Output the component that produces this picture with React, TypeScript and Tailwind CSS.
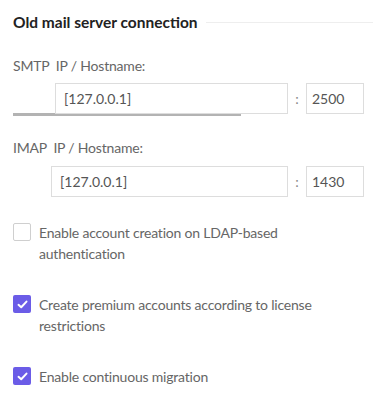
import React from "react";

function Check({ checked }: { checked: boolean }) {
  return checked ? (
    <span className="flex h-[18px] w-[18px] shrink-0 items-center justify-center rounded-[2px] bg-[#6b5ce7]">
      <svg width="11" height="9" viewBox="0 0 11 9" fill="none">
        <path d="M1.5 4.8 L4.2 7.2 L9.5 1.6" stroke="white" strokeWidth="2" strokeLinecap="round" strokeLinejoin="round" />
      </svg>
    </span>
  ) : (
    <span className="block h-[18px] w-[18px] shrink-0 rounded-[2px] border border-[#cfcfcf] bg-white" />
  );
}

export default function App() {
  return (
    <div className="h-[404px] w-[373px] bg-white pl-[13px] text-[#555]" style={{ fontFamily: "Lato, 'Noto Sans', sans-serif" }}>
      <div className="flex items-center pt-[11px]">
        <h2 className="text-[15.5px] font-bold leading-[22px] text-[#222]">Old mail server connection</h2>
        <div className="ml-[8px] h-px flex-1 bg-[#eeeeee]" />
      </div>

      <div className="mt-[24px] text-[14px] leading-[18px] tracking-[-0.2px] text-[#666]">SMTP&nbsp; IP / Hostname:</div>
      <div className="relative mt-[8px] flex items-center">
        <div className="absolute left-0 top-[30px] h-[3px] w-[228px] bg-[#b3b3b3]" />
        <div className="relative ml-[42px] flex h-[31px] w-[233px] items-center border border-[#dddddd] bg-white px-[8px] text-[14px] text-[#555]">[127.0.0.1]</div>
        <span className="w-[18px] text-center text-[14px] text-[#888]">:</span>
        <div className="flex h-[31px] w-[58px] items-center border border-[#dddddd] px-[5px] text-[14px] text-[#555]">2500</div>
      </div>

      <div className="mt-[25px] text-[14px] leading-[18px] tracking-[-0.2px] text-[#666]">IMAP&nbsp; IP / Hostname:</div>
      <div className="mt-[9px] flex items-center">
        <div className="ml-[38px] flex h-[31px] w-[237px] items-center border border-[#dddddd] bg-white px-[8px] text-[14px] text-[#555]">[127.0.0.1]</div>
        <span className="w-[18px] text-center text-[14px] text-[#888]">:</span>
        <div className="flex h-[31px] w-[58px] items-center border border-[#dddddd] px-[5px] text-[14px] text-[#555]">1430</div>
      </div>

      <div className="mt-[25px] flex items-start gap-[8px]">
        <div className="pt-[1px]"><Check checked={false} /></div>
        <div className="w-[300px] text-[14px] leading-[21px] tracking-[-0.2px] text-[#666]">Enable account creation on LDAP-based authentication</div>
      </div>

      <div className="mt-[30px] flex items-start gap-[8px]">
        <div className="pt-[1px]"><Check checked={true} /></div>
        <div className="w-[320px] text-[14px] leading-[21px] tracking-[-0.2px] text-[#666]">Create premium accounts according to license restrictions</div>
      </div>

      <div className="mt-[30px] flex items-start gap-[8px]">
        <div className="pt-[1px]"><Check checked={true} /></div>
        <div className="text-[14px] leading-[21px] tracking-[-0.2px] text-[#666]">Enable continuous migration</div>
      </div>
    </div>
  );
}
